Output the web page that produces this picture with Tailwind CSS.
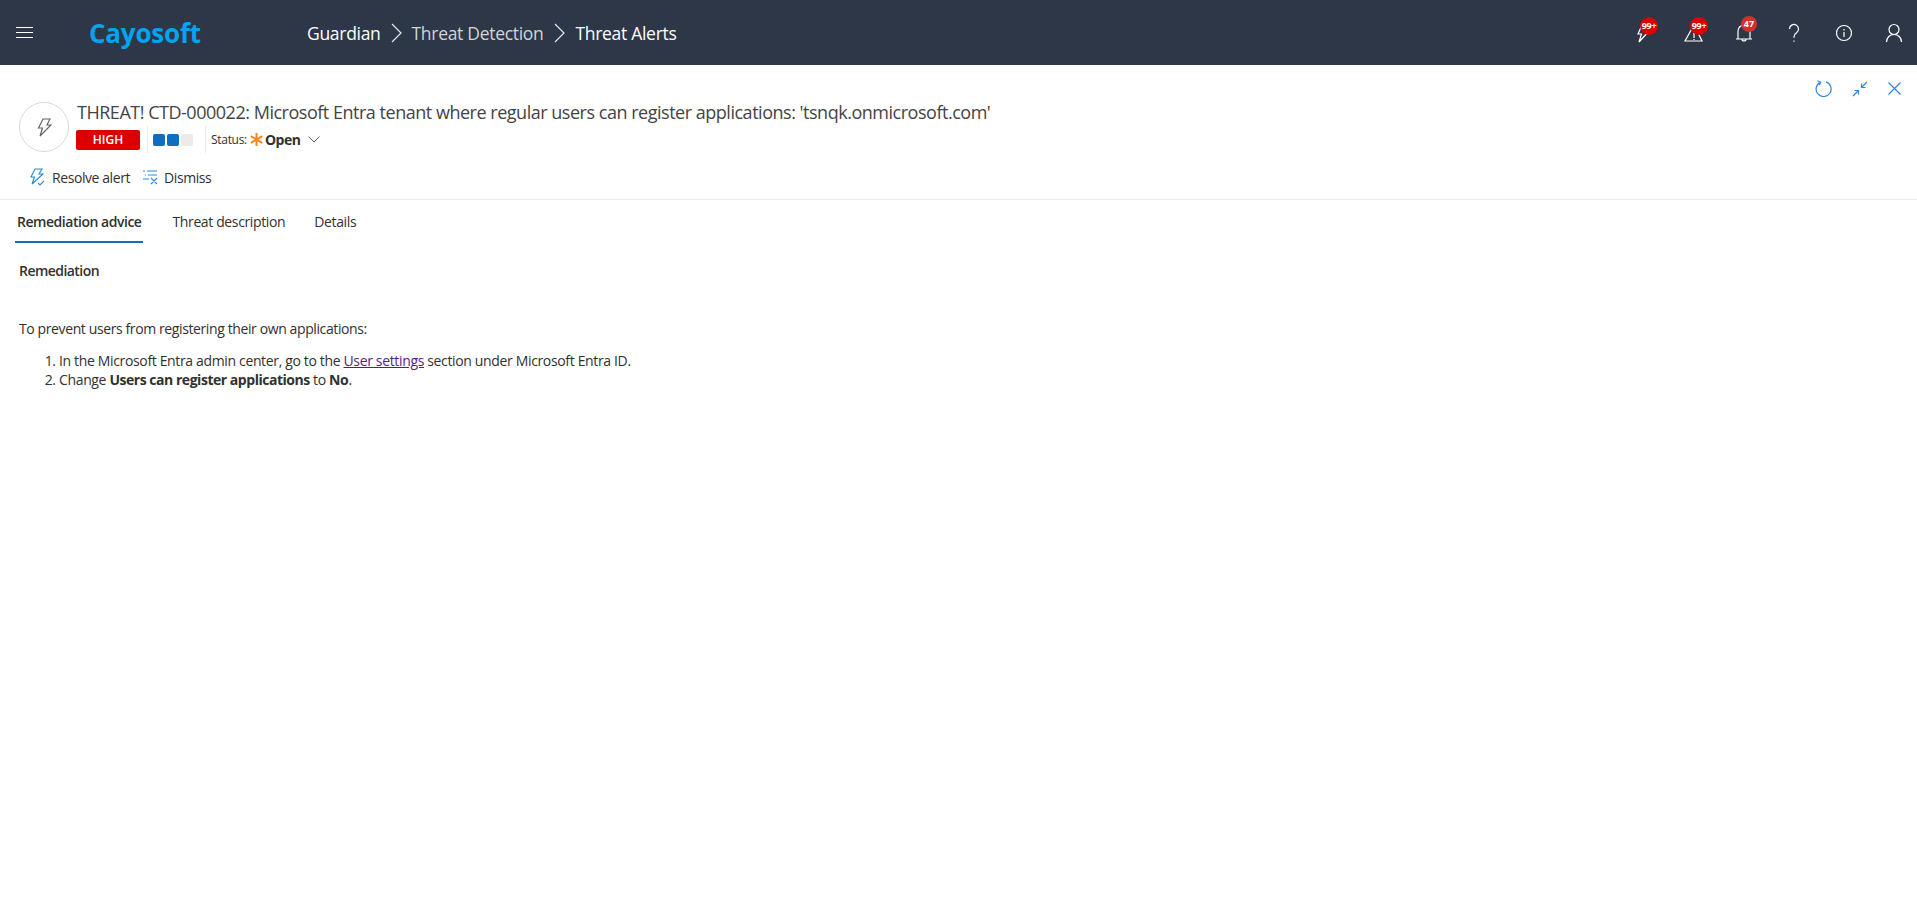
<!DOCTYPE html>
<html lang="en">
  <head>
    <meta charset="UTF-8" />
    <title>Threat Alerts</title>
    <script src="https://cdn.jsdelivr.net/npm/@tailwindcss/browser@4"></script>
  </head>

  <body class="h-screen overflow-hidden bg-white font-['Open_Sans',sans-serif] text-[#323130]">
    <!-- top bar -->
    <div class="flex h-[65px] items-center bg-[#2d3748] text-white">
      <svg class="ml-[16px] h-[11px] w-[17px]" viewBox="0 0 17 11" fill="none" stroke="white" stroke-width="1">
        <path d="M0 .5h17M0 5.500h17M0 10.500h17" />
      </svg>
      <div class="ml-[56px] w-[218px] text-[26px] leading-none font-bold tracking-[-0.2px] text-[#00a4ef]">Cayosoft</div>
      <div class="flex items-center pt-[1px] text-[17.5px] tracking-[-0.3px]">
        <span>Guardian</span>
        <svg class="mx-[10px] h-[20px] w-[11px]" viewBox="0 0 11 20" fill="none" stroke="#e5e7eb" stroke-width="1.2"><path d="M1 1l9 9-9 9" /></svg>
        <span class="text-[#d4d4d4]">Threat Detection</span>
        <svg class="mx-[10.500px] h-[20px] w-[11px]" viewBox="0 0 11 20" fill="none" stroke="#e5e7eb" stroke-width="1.2"><path d="M1 1l9 9-9 9" /></svg>
        <span>Threat Alerts</span>
      </div>

      <div class="ml-auto mr-[13px] flex items-center gap-[30px]">
        <div class="relative h-[20px] w-[20px]">
          <svg class="h-[20px] w-[20px]" viewBox="0 0 20 20" fill="none" stroke="white" stroke-width="1.2"><path d="M8 2h7l-3 5h4L5 19l2.500-8H4z" /></svg>
          <span class="absolute -top-[6px] left-[6px] flex h-[18px] w-[18px] items-center justify-center rounded-full bg-[#de0000] text-[9px] font-bold tracking-[-0.3px]">99+</span>
        </div>
        <div class="relative h-[20px] w-[20px]">
          <svg class="h-[20px] w-[20px]" viewBox="0 0 20 20" fill="none" stroke="white" stroke-width="1.2"><path d="M10 2L1 18h17L10 2zM10 10v5M10 16v1" /></svg>
          <span class="absolute -top-[6px] left-[6px] flex h-[18px] w-[18px] items-center justify-center rounded-full bg-[#de0000] text-[9px] font-bold tracking-[-0.3px]">99+</span>
        </div>
        <div class="relative h-[20px] w-[20px]">
          <svg class="h-[20px] w-[20px]" viewBox="0 0 20 20" fill="none" stroke="white" stroke-width="1.2"><path d="M4 16V8a6 6 0 0 1 12 0v8M2 16h16M8 16a2 2 0 0 0 4 0" /></svg>
          <span class="absolute -top-[7px] left-[7px] flex h-[16px] w-[16px] items-center justify-center rounded-full bg-[#d32f2f] text-[9px] font-bold">47</span>
        </div>
        <svg class="h-[20px] w-[20px]" viewBox="0 0 20 20" fill="none" stroke="white" stroke-width="1.2"><path d="M5.500 6a4.500 4.500 0 1 1 7 3.700c-1.600 1.100-2.500 2-2.500 4v1M10 17.500v1.200" /></svg>
        <svg class="h-[20px] w-[20px]" viewBox="0 0 20 20" fill="none" stroke="white" stroke-width="1.2"><circle cx="10" cy="10" r="7.500" /><path d="M10 9v5M10 6v1.400" /></svg>
        <svg class="h-[20px] w-[20px]" viewBox="0 0 20 20" fill="none" stroke="white" stroke-width="1.2"><circle cx="10" cy="6.500" r="5" /><path d="M2.500 19c0-4 3-7.500 7.500-7.500s7.500 3.500 7.500 7.500" /></svg>
      </div>
    </div>

    <!-- alert header -->
    <div class="relative h-[135px] border-b border-[#edebe9]">
      <div class="absolute right-[16px] top-[15px] flex items-center gap-[20px]">
        <svg class="h-[17px] w-[17px]" viewBox="0 0 17 17" fill="none" stroke="#2b88d8" stroke-width="1.2"><path d="M5.500 2.200a7.500 7.500 0 1 0 5.500-.3M2.500 .8l3.200 1.500-1.500 3" /></svg>
        <svg class="h-[16px] w-[16px]" viewBox="0 0 16 16" fill="none" stroke="#2b88d8" stroke-width="1.200"><path d="M1 15l5.500-5.500M2.500 9.500h4v4M15 1L9.500 6.500M9.500 2.500v4h4" /></svg>
        <svg class="h-[13px] w-[13px]" viewBox="0 0 13 13" fill="none" stroke="#2b88d8" stroke-width="1.200"><path d="M.5 .5l12 12M12.500 .5l-12 12" /></svg>
      </div>

      <div class="flex items-start pt-[35px] pl-[19px]">
        <div class="mt-[2px] flex h-[50px] w-[50px] items-center justify-center rounded-full border border-[#d9d9d9]">
          <svg class="h-[19px] w-[15px]" viewBox="0 0 15 19" fill="none" stroke="#605e5c" stroke-width="1.100"><path d="M6 1h7l-3 6h4L3 18l2.500-8H1.500z" /></svg>
        </div>
        <div class="ml-[8px]">
          <div class="text-[18px] leading-[24px] tracking-[-0.48px] text-[#444]">THREAT! CTD-000022: Microsoft Entra tenant where regular users can register applications: 'tsnqk.onmicrosoft.com'</div>
          <div class="mt-[2px] -ml-[1px] flex h-[27px] items-center">
            <div class="flex h-[20px] w-[64px] items-center justify-center rounded-[2px] bg-[#de0000] text-[12px] font-semibold text-white">HIGH</div>
            <div class="ml-[7px] flex h-full items-center gap-[1px] border-x border-[#edebe9] pr-[12px] pl-[5px]">
              <span class="h-[12px] w-[12px] rounded-[2px] bg-[#106ebe]"></span>
              <span class="ml-[1px] h-[12px] w-[12px] rounded-[2px] bg-[#106ebe]"></span>
              <span class="ml-[1px] h-[12px] w-[12px] rounded-[2px] bg-[#edebe9]"></span>
            </div>
            <span class="ml-[5px] text-[12px] tracking-[-0.3px]">Status:</span>
            <svg class="ml-[3px] h-[13px] w-[13px]" viewBox="0 0 13 13" stroke="#f7861e" stroke-width="2"><path d="M6.500 0v13M.8 3.200l11.400 6.600M12.200 3.200L.8 9.800" /></svg>
            <span class="ml-[2px] text-[14px] font-bold tracking-[-0.5px]">Open</span>
            <svg class="ml-[8px] h-[7px] w-[12px]" viewBox="0 0 12 7" fill="none" stroke="#605e5c" stroke-width="1"><path d="M.5 .5L6 6 11.500 .5" /></svg>
          </div>
        </div>
      </div>

      <div class="mt-[10px] flex h-[28px] items-center pl-[30px] text-[14px] tracking-[-0.42px]">
        <svg class="h-[18px] w-[15px]" viewBox="0 0 15 18" fill="none" stroke="#2b88d8" stroke-width="1.100"><path d="M5 1h7L9 6h4L2 16l2.500-7H1zM8 15l2 2 4-4" /></svg>
        <span class="ml-[7px]">Resolve alert</span>
        <svg class="ml-[12px] h-[16px] w-[17px]" viewBox="0 0 17 16" fill="none" stroke="#2b88d8" stroke-width="1.100"><path d="M1 2h2M5 2h10M3 6h1M6 6h9M1 10h6M9 9l6 6M15 9l-6 6" /></svg>
        <span class="ml-[5px]">Dismiss</span>
      </div>
    </div>

    <!-- tabs -->
    <div class="flex h-[43px] items-start pl-[15px] text-[14px] tracking-[-0.37px]">
      <div class="h-[43px] border-b-2 border-[#106ebe] px-[2px] pt-[11px] font-semibold tracking-[-0.47px]">Remediation advice</div>
      <div class="ml-[29px] pt-[11px]">Threat description</div>
      <div class="ml-[29px] pt-[11px]">Details</div>
    </div>

    <!-- content -->
    <div class="px-[19px] text-[14px] tracking-[-0.39px]">
      <div class="mt-[17px] font-semibold tracking-[-0.55px]">Remediation</div>
      <p class="mt-[37px]">To prevent users from registering their own applications:</p>
      <ol class="mt-[12px] list-decimal pl-[40px] leading-[19px] tracking-[-0.35px]">
        <li>In the Microsoft Entra admin center, go to the <a class="text-[#551a8b] underline" href="#">User settings</a> section under Microsoft Entra ID.</li>
        <li>Change <b class="tracking-[-0.47px]">Users can register applications</b> to <b>No</b>.</li>
      </ol>
    </div>
  </body>
</html>
